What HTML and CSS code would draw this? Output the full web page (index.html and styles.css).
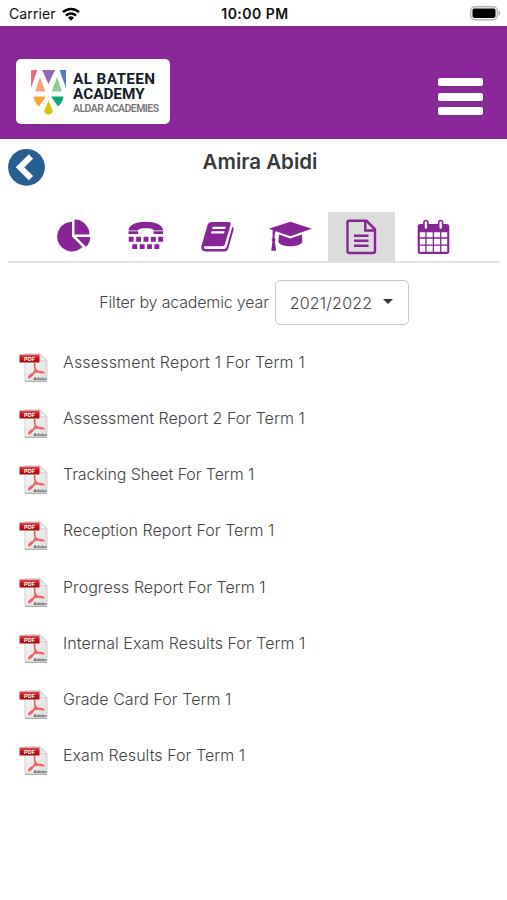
FILE: index.html
```html
<!DOCTYPE html>
<html lang="en">
<head>
    <meta charset="UTF-8">
    <meta name="viewport" content="width=device-width, initial-scale=1">
    <title>Amira Abidi - Reports</title>
    <link rel="stylesheet" href="styles.css">
</head>
<body>
    <!-- shared pdf icon -->
    <svg class="defs" width="0" height="0">
        <defs>
            <linearGradient id="paper" x1="0" y1="0" x2="1" y2="1">
                <stop offset="0" stop-color="#fafafa"/>
                <stop offset="1" stop-color="#dcdcdc"/>
            </linearGradient>
            <linearGradient id="red" x1="0" y1="0" x2="0" y2="1">
                <stop offset="0" stop-color="#dc5552"/>
                <stop offset="0.5" stop-color="#c01318"/>
                <stop offset="1" stop-color="#a80e12"/>
            </linearGradient>
            <symbol id="pdf" viewBox="0 0 30 30">
                <path d="M6 .8h15l7 7V28H6z" fill="url(#paper)" stroke="#c4c4c4" stroke-width=".8"/>
                <path d="M6 28.4h22" stroke="#aaa" stroke-width="1"/>
                <path d="M21 .8v7h7z" fill="#eee" stroke="#c0c0c0" stroke-width=".7"/>
                <path d="M15.800 9.500c-.6 3 .3 5.800 .3 7.500-1.300 3.400-4 7-6.500 7.800 .6-2.600 4-4.600 7-5.600 3-.8 6-.7 8.200.6-3.600.2-6.700-1.300-8.700-3.800" fill="none" stroke="#f0605c" stroke-width="1.600" stroke-linejoin="round"/>
                <rect x=".5" y="1.500" width="20" height="8" fill="url(#red)"/>
                <text x="10.500" y="7.500" class="pdf-tag">PDF</text>
                <text x="21" y="26.800" class="pdf-brand">Adobe</text>
            </symbol>
        </defs>
    </svg>

    <div class="status-bar">
        <div class="carrier">
            <span>Carrier</span>
            <svg width="18" height="14" viewBox="0 0 18 14" fill="none" stroke="#000" stroke-width="2.500">
                <path d="M1 5.200a11.500 11.500 0 0 1 16 0"/>
                <path d="M4 8.600a7.200 7.200 0 0 1 10 0"/>
                <path d="M9 13.700L6 10.800a4.300 4.300 0 0 1 6 0z" fill="#000" stroke="none"/>
            </svg>
        </div>
        <div class="clock">10:00 PM</div>
        <svg class="battery" width="31" height="15" viewBox="0 0 31 15">
            <rect x=".7" y=".7" width="26.600" height="13" rx="4" fill="#fff" stroke="#b5b5b5" stroke-width="1.400"/>
            <rect x="2.500" y="2.500" width="23" height="9.400" rx="2" fill="#000"/>
            <path d="M28.500 4.700c2.500 1 2.500 4 0 5z" fill="#b5b5b5"/>
        </svg>
    </div>

    <header class="header">
        <div class="logo">
            <svg width="35" height="46" viewBox="0 0 35 46">
                <path d="M0 0h6.500L0 18z" fill="#e66f83"/>
                <path d="M11 0h13l-6.500 14z" fill="#8f6bb0"/>
                <path d="M28.500 0H35v18z" fill="#4a7fc3"/>
                <path d="M9 7l5.300 14.500H4z" fill="#f3a583"/>
                <path d="M26 7l5 14.500H20.700z" fill="#8fca96"/>
                <path d="M2.500 26.500h12.500L8 36.500C4.500 33.500 2.800 30 2.500 26.500z" fill="#f4a63a"/>
                <path d="M20 26.500h12.500c-.3 3.500-2 7-5.500 10z" fill="#12a377"/>
                <path d="M17.500 30.500l4.500 11c-2.500 4-6.500 4-9 0z" fill="#d2c70c"/>
            </svg>
            <div class="logo-text">
                <div class="logo-line1">AL BATEEN</div>
                <div class="logo-line2">ACADEMY</div>
                <div class="logo-sub">ALDAR ACADEMIES</div>
            </div>
        </div>
        <div class="menu">
            <span></span>
            <span></span>
            <span></span>
        </div>
    </header>

    <div class="title-row">
        <svg class="back" width="38" height="38" viewBox="0 0 38 38">
            <circle cx="19.500" cy="19.300" r="18.400" fill="#275f93"/>
            <path d="M24 8.500L13 19.300 24 30.100" fill="none" stroke="#fff" stroke-width="6"/>
        </svg>
        <h1>Amira Abidi</h1>
    </div>

    <nav class="tabs">
        <div class="tab">
            <svg viewBox="0 0 67 50">
                <path d="M32 9.800A14.800 14.800 0 1 0 42.500 35L32 24.600z"/>
                <path d="M34.500 7.500A15 15 0 0 1 49.500 22.500H34.500z"/>
                <path d="M36.300 25H50.300A14 14 0 0 1 46 34.800z"/>
            </svg>
        </div>
        <div class="tab">
            <svg viewBox="0.500 0 67 50">
                <path d="M17 18.500c0-5.700 8-8.700 17.300-8.700s17.300 3 17.300 8.700H42c-.4-1.800-2.500-2.300-7.700-2.300s-7.300.5-7.700 2.300z"/>
                <path d="M17 19.300h9.600v2.700H17zM42 19.300h9.600v2.700H42z"/>
                <path d="M17.200 24.800h4.900v4.900h-4.900zM24.600 24.800h4.900v4.900h-4.900zM32 24.800h4.900v4.900H32zM39.400 24.800h4.900v4.900h-4.900zM46.700 24.800h4.900v4.900h-4.900zM20.800 32.200h4.900v4.900h-4.900zM28.200 32.200h4.900v4.900h-4.900zM35.600 32.200h4.900v4.900h-4.900zM42.900 32.200h4.900v4.900h-4.900z"/>
            </svg>
        </div>
        <div class="tab">
            <svg viewBox="0.500 0 67 50">
                <path fill-rule="evenodd" d="M28 10h17.500q2.300 0 1.600 2.400L41.500 32q-.6 2.200-2.800 2.200H22c-2.300 0-2 2.700 0 2.700h18.500q2 0 2.600-2L48.800 15q1.900.5 1.400 2.400L44.700 36.500q-.9 2.900-3.800 2.900H22.300c-3.200 0-5.300-3-4.200-6L24.200 12.500Q25 10 28 10zM29.300 14.800l-.6 2.100h13l.6-2.100zM28.100 19.300l-.6 2.100h13l.6-2.100z"/>
            </svg>
        </div>
        <div class="tab">
            <svg viewBox="0.500 0 67 50">
                <path d="M34.800 9.800L56.300 16.700 34.800 24.300 13.200 16.700z"/>
                <path d="M23.500 22.500l11.300 4 11.600-4 .4 7.500c-3 5.800-20.700 5.800-24 0z"/>
                <path d="M17.200 17.500l3.300 1.200c-1.300 2-1.400 4.500-1.300 7.300q1.800 1.800.2 3.500l1.300 9.200h-5l1.200-9.200q-1.700-1.700.1-3.500z"/>
            </svg>
        </div>
        <div class="tab active">
            <svg viewBox="0 0 67 50">
                <g class="lines">
                    <path d="M21 8.800h17.500l8.500 8.500V39q0 2-2 2H21.500q-2 0-2-2V10.300q0-1.500 1.500-1.500z"/>
                    <path d="M37.300 9v9.500H47"/>
                    <path d="M26 23.700h14.500M26 28.700h14.500M26 33.700h14.500"/>
                </g>
            </svg>
        </div>
        <div class="tab">
            <svg viewBox="0.500 0 67 50">
                <rect x="18.200" y="12" width="31.600" height="30" rx="2.500"/>
                <path class="cell" d="M20.300 20.300h5.500v5h-5.500zM27.100 20.300h6.100v5h-6.100zM34.500 20.300h6.100v5h-6.100zM41.900 20.300h5.800v5h-5.800zM20.300 26.700h5.500v5.700h-5.500zM27.100 26.700h6.100v5.700h-6.100zM34.500 26.700h6.100v5.700h-6.100zM41.900 26.700h5.800v5.700h-5.800zM20.300 33.800h5.500v5.900h-5.500zM27.100 33.800h6.100v5.900h-6.100zM34.500 33.800h6.100v5.900h-6.100zM41.900 33.800h5.800v5.900h-5.800z"/>
                <rect class="ring" x="24.400" y="8.500" width="4" height="9" rx="2"/>
                <rect class="ring" x="39.200" y="8.500" width="4" height="9" rx="2"/>
            </svg>
        </div>
    </nav>

    <div class="filter">
        <label>Filter by academic year</label>
        <div class="select">
            <span>2021/2022</span>
            <i class="caret"></i>
        </div>
    </div>

    <ul class="reports">
        <li><svg><use href="#pdf"/></svg><span class="wide">Assessment Report 1 For Term 1</span></li>
        <li><svg><use href="#pdf"/></svg><span>Assessment Report 2 For Term 1</span></li>
        <li><svg><use href="#pdf"/></svg><span class="tight">Tracking Sheet For Term 1</span></li>
        <li><svg><use href="#pdf"/></svg><span>Reception Report For Term 1</span></li>
        <li><svg><use href="#pdf"/></svg><span>Progress Report For Term 1</span></li>
        <li><svg><use href="#pdf"/></svg><span>Internal Exam Results For Term 1</span></li>
        <li><svg><use href="#pdf"/></svg><span>Grade Card For Term 1</span></li>
        <li><svg><use href="#pdf"/></svg><span>Exam Results For Term 1</span></li>
    </ul>
</body>
</html>
```
FILE: styles.css
```css
* { box-sizing: border-box; }
body { margin: 0; background: #fff; color: #444; font-family: Inter, "Liberation Sans", Arial, sans-serif; font-size: 16px; height: 900px; overflow: hidden; }
svg { display: block; flex: none; }
.defs { position: absolute; }

/* status bar */
.status-bar { height: 26px; display: grid; grid-template-columns: 1fr auto 1fr; align-items: center; padding: 1px 6px 0 9px; color: #111; }
.carrier { display: flex; align-items: center; gap: 6px; font-size: 14px; letter-spacing: 0.1px; }
.clock { font-size: 14px; font-weight: 600; letter-spacing: 0.5px; }
.battery { justify-self: end; }

/* header */
.header { height: 113px; background: #892799; display: flex; justify-content: space-between; align-items: flex-start; padding: 33px 24px 0 16px; }
.logo { width: 154px; height: 65px; background: #fff; border-radius: 5px; display: flex; padding: 11px 0 0 15px; gap: 7px; }
.logo-text { font-family: Roboto, "Liberation Sans", sans-serif; white-space: nowrap; padding-top: 2px; }
.logo-line1, .logo-line2 { font-size: 15.3px; line-height: 15px; font-weight: 700; color: #15202b; }
.logo-line1 { letter-spacing: 0.4px; }
.logo-sub { font-size: 10.5px; line-height: 13px; padding-top: 0; font-weight: 600; letter-spacing: -0.55px; color: #777; }
.menu { display: flex; flex-direction: column; gap: 6.6px; padding-top: 19px; }
.menu span { width: 45px; height: 8px; border-radius: 2px; background: #fff; }

/* student name */
.title-row { height: 73px; display: grid; grid-template-columns: 38px 1fr 25px; padding: 9px 7px 0 7px; }
h1 { margin: 0; text-align: center; font-size: 20.5px; line-height: 27px; font-weight: 600; color: #3a3a3a; }

/* icon tabs */
.tabs { display: flex; gap: 5px; margin: 0 7px 0 8px; padding-left: 31.5px; border-bottom: 2px solid #e2e2e2; }
.tab { width: 67px; height: 49px; }
.tab.active { background: #dcdcdc; }
.tab svg { width: 67px; height: 50px; fill: #872597; }
.lines { fill: none; stroke: #872597; stroke-width: 2.4; }
.cell { fill: #fff; }
.ring { fill: #fff; stroke: #872597; stroke-width: 1.6; }

/* year filter */
.filter { display: flex; justify-content: center; align-items: center; gap: 6px; padding: 17px 0 0 1px; font-weight: 300; }
.filter label { letter-spacing: -0.17px; margin-top: -2px; }
.select { width: 134px; height: 45px; border: 1px solid #c8c8c8; border-radius: 5px; display: flex; align-items: center; padding-left: 14px; gap: 11px; letter-spacing: 0.2px; }
.caret { border: 5px solid transparent; border-top-color: #333; border-bottom: 0; margin-top: -2px; }

/* report list */
.reports { list-style: none; margin: 0; padding: 28px 0 0 19px; font-weight: 300; }
.reports li { display: flex; gap: 14px; height: 56.15px; }
.reports svg { width: 30px; height: 30px; }
.reports span { line-height: 22px; margin-top: -2px; white-space: nowrap; letter-spacing: 0.05px; }
.reports .wide { letter-spacing: 0.17px; }
.reports .tight { letter-spacing: -0.08px; }
.pdf-tag { font: bold 5.5px "Liberation Sans", sans-serif; fill: #fff; text-anchor: middle; }
.pdf-brand { font: bold 4.2px "Liberation Sans", sans-serif; fill: #555; text-anchor: middle; }
```
